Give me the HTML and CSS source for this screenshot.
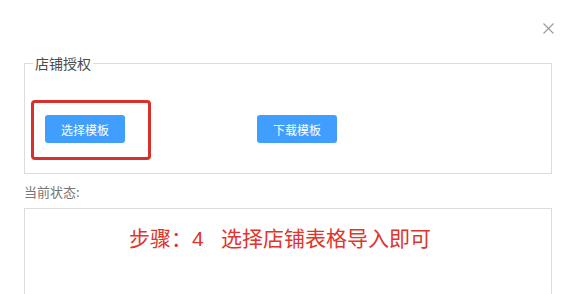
FILE: index.html
```html
<!DOCTYPE html>
<html lang="zh-CN">
<head>
<meta charset="utf-8">
<title>店铺授权</title>
<link rel="stylesheet" href="styles.css">
</head>
<body>
<div class="dialog">
  <div class="dialog-header">
    <span class="close" aria-label="关闭">
      <svg width="11" height="11" viewBox="0 0 11 11"><path d="M0.5 0.5 L10.5 10.5 M10.5 0.5 L0.5 10.5" stroke="#9a9a9a" stroke-width="1.1" fill="none"/></svg>
    </span>
  </div>
  <div class="dialog-body">
    <fieldset class="group">
      <legend class="group-title">店铺授权</legend>
      <div class="btn-row">
        <span class="mark-wrap">
          <button class="btn">选择模板</button>
          <span class="mark"></span>
        </span>
        <button class="btn btn-second">下载模板</button>
      </div>
    </fieldset>
    <div class="status-label">当前状态:</div>
    <div class="status-box">
      <p class="status-text">步骤：4&nbsp;&nbsp;&nbsp;选择店铺表格导入即可</p>
    </div>
  </div>
</div>
</body>
</html>
```
FILE: styles.css
```css
html, body {
  margin: 0;
  padding: 0;
  background: #ffffff;
}
body {
  font-family: "Noto Sans CJK SC", "Liberation Sans", sans-serif;
  color: #333;
  overflow: hidden;
}
.dialog {
  width: 567px;
  height: 294px;
  overflow: hidden;
}
.dialog-header {
  height: 53px;
  display: flex;
  justify-content: flex-end;
  align-items: flex-start;
  padding-right: 13px;
  box-sizing: border-box;
}
.close {
  margin-top: 23px;
  width: 11px;
  height: 11px;
  display: block;
  line-height: 0;
}
.dialog-body {
  padding: 0 15px 0 24px;
}
.group {
  margin: 0;
  padding: 0;
  min-width: 0;
  border: 1px solid #dcdcdc;
}
.group-title {
  margin-left: 8px;
  padding: 0 2px;
  font-size: 14px;
  line-height: 20px;
  color: #4a4a4a;
}
.btn-row {
  display: flex;
  align-items: center;
  padding: 42px 0 30px 20px;
}
.mark-wrap {
  position: relative;
  display: block;
}
.mark {
  position: absolute;
  left: -14px;
  top: -15px;
  width: 120px;
  height: 60px;
  box-sizing: border-box;
  border: 3px solid #d8312b;
  border-radius: 4px;
  pointer-events: none;
}
.btn {
  display: block;
  width: 80px;
  height: 28px;
  border: none;
  border-radius: 3px;
  background: #409eff;
  color: #fff;
  font-family: "Noto Sans CJK SC", sans-serif;
  font-size: 12px;
  padding: 0;
  cursor: pointer;
}
.btn-second {
  margin-left: 132px;
}
.status-label {
  margin-top: 8px;
  font-size: 13px;
  line-height: 20px;
  color: #777;
}
.status-box {
  margin-top: 6px;
  height: 86px;
  border: 1px solid #dcdcdc;
}
.status-text {
  margin: 0;
  padding: 15px 16px 0 0;
  text-align: center;
  font-family: "Liberation Sans", "Noto Sans CJK SC", sans-serif;
  font-size: 21px;
  line-height: 30px;
  color: #e0352c;
}
```
